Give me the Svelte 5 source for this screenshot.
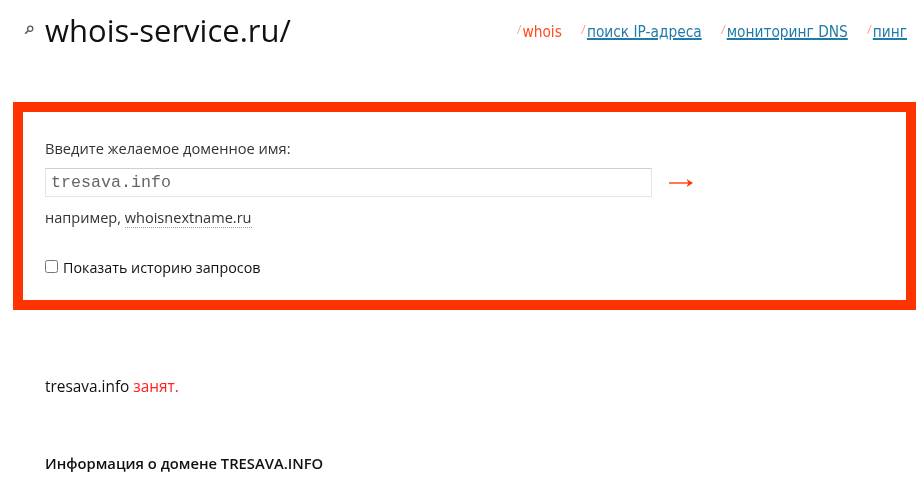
<script>
  const links = [
    { label: 'поиск IP-адреса' },
    { label: 'мониторинг DNS' },
    { label: 'пинг' }
  ]
  let domain = $state('tresava.info')
</script>

<div class="page">
  <header>
    <div class="logo">
      <svg class="lens" width="10" height="10" viewBox="0 0 10 10" fill="none">
        <circle cx="6.2" cy="3.8" r="2.6" stroke="#555" stroke-width="1.3" />
        <path d="M4.2 5.8 L1.2 8.8" stroke="#555" stroke-width="1.6" />
      </svg>
      <span class="title">whois-service.ru/</span>
    </div>
    <nav>
      <span class="item"><i>/</i><span class="current">whois</span></span>
      {#each links as link}
        <span class="item"><i>/</i><a href="#top">{link.label}</a></span>
      {/each}
    </nav>
  </header>

  <form class="box">
    <label class="prompt" for="domain">Введите желаемое доменное имя:</label>
    <div class="field">
      <input id="domain" type="text" bind:value={domain} />
      <svg class="go" width="26" height="12" viewBox="0 0 26 12" fill="none">
        <path d="M1 6 H23" stroke="#ff6a45" stroke-width="1.8" />
        <path d="M18.5 2 L25 6 L18.5 10 L20.5 6 Z" fill="#ff3300" />
      </svg>
    </div>
    <p class="hint">например, <span class="sample">whoisnextname.ru</span></p>
    <label class="history"><input type="checkbox" /> Показать историю запросов</label>
  </form>

  <p class="status">tresava.info <span class="busy">занят.</span></p>
  <h2>Информация о домене TRESAVA.INFO</h2>
</div>

<style>
  :global(body) {
    background: #fff;
  }

  .page {
    width: 922px;
    height: 489px;
    overflow: hidden;
    font-family: "Open Sans", "Noto Sans", sans-serif;
    color: #111;
    filter: blur(0.35px);
  }

  header {
    height: 102px;
    display: flex;
    justify-content: space-between;
    align-items: flex-start;
    padding: 9px 15px 0 24px;
    box-sizing: border-box;
  }

  .logo {
    display: flex;
    align-items: center;
    gap: 11px;
  }

  .title {
    font-size: 31px;
    line-height: 42px;
  }

  nav {
    display: flex;
    gap: 20px;
    padding-top: 11px;
    font-family: "DejaVu Sans Condensed", "DejaVu Sans", sans-serif;
    font-size: 15.3px;
    line-height: 20px;
  }

  .item i {
    color: #ff8a70;
    font-size: 10px;
    margin-right: 2px;
    vertical-align: 4px;
  }

  .current {
    color: #ff4a20;
  }

  nav a {
    color: #1f7ba8;
    text-decoration-thickness: 1.5px;
  }

  .box {
    width: 903px;
    height: 208px;
    margin-left: 13px;
    box-sizing: border-box;
    border: 10px solid #ff3300;
    padding: 26px 0 0 22px;
  }

  .prompt {
    display: block;
    font-size: 14.65px;
    line-height: 20px;
    color: #333;
  }

  .field {
    display: flex;
    align-items: center;
    gap: 16px;
    margin-top: 10px;
  }

  #domain {
    width: 607px;
    height: 29px;
    box-sizing: border-box;
    border: 1px solid #e4e4e8;
    border-top-color: #cfcfcf;
    padding: 0 5px;
    font-family: "Liberation Mono", monospace;
    font-size: 16.67px;
    color: #666;
    outline: none;
  }

  .hint {
    margin: 10px 0 0;
    font-size: 14.55px;
    line-height: 20px;
    color: #333;
  }

  .sample {
    border-bottom: 1px dotted #999;
  }

  .history {
    display: flex;
    align-items: center;
    gap: 5px;
    margin-top: 31px;
    font-size: 14.3px;
    line-height: 20px;
    color: #111;
  }

  .history input {
    width: 13px;
    height: 13px;
    margin: -3px 0 0;
  }

  .status {
    margin: 67px 0 0 45px;
    font-size: 15.4px;
    line-height: 20px;
  }

  .busy {
    color: #ff2020;
  }

  h2 {
    margin: 56px 0 0 45px;
    font-size: 14.75px;
    line-height: 20px;
    font-weight: 600;
  }
</style>
